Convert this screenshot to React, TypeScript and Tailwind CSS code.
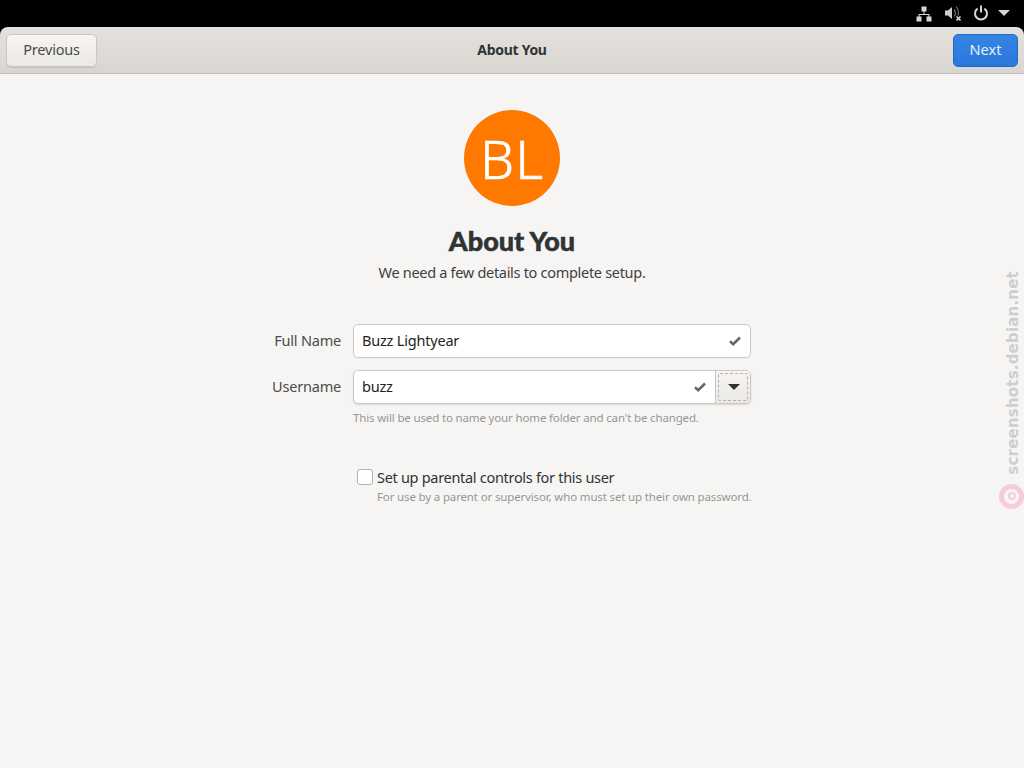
const font = "[font-family:'Noto_Sans',sans-serif]";

const NetworkIcon = () => (
  <svg width="16" height="16" viewBox="0 0 16 16" fill="#d6d6d6">
    <rect x="5.5" y="0.5" width="5" height="5" />
    <rect x="0.5" y="10.5" width="5" height="5" />
    <rect x="10.5" y="10.5" width="5" height="5" />
    <path d="M7.5 5h1v3h5v3h-1V9H3.5v2h-1V8h5z" />
  </svg>
);

const VolumeMutedIcon = () => (
  <svg width="18" height="18" viewBox="0 0 18 18" fill="none">
    <path d="M1 5.5h3l4-3.5v12l-4-3.5H1z" fill="#cfcfcf" />
    <path d="M10 4.5c1 1 1.4 2.2 1.4 3.5s-.4 2.5-1 3.3" stroke="#777" strokeWidth="1.2" />
    <path d="M12 1.5c1.6 1.7 2.4 3.8 2.4 6 0 1.2-.2 2.4-.6 3.4" stroke="#666" strokeWidth="1.2" />
    <path d="M12.5 11.5l4 4m0-4l-4 4" stroke="#d6d6d6" strokeWidth="1.7" />
  </svg>
);

const PowerIcon = () => (
  <svg width="16" height="16" viewBox="0 0 16 16" fill="none" stroke="#d6d6d6" strokeWidth="2">
    <path d="M4.6 3.6a6 6 0 1 0 6.8 0" />
    <path d="M8 0.5v7" />
  </svg>
);

const Check = () => (
  <svg width="12" height="10" viewBox="0 0 12 10" fill="none" stroke="#666865" strokeWidth="2.6">
    <path d="M1 5.2l3.2 3L11 1.5" />
  </svg>
);

const TopBar = () => (
  <div className="h-[27px] bg-black flex items-center justify-end">
    <div className="mr-[92px]"><NetworkIcon /></div>
    <div className="absolute left-[944px] top-[5px]"><VolumeMutedIcon /></div>
    <div className="absolute left-[973px] top-[5px]"><PowerIcon /></div>
    <div className="absolute left-[998px] top-[10px] w-0 h-0 border-x-[6px] border-x-transparent border-t-[6px] border-t-[#d6d6d6]" />
  </div>
);

const HeaderBar = () => (
  <div className="h-[47px] rounded-t-[8px] border-b border-[#c0bbb5] bg-gradient-to-b from-[#e5e2de] to-[#d9d6d1] flex items-center justify-between pl-[6px] pr-[6px] relative">
    <button className="h-[33px] w-[91px] rounded-[5px] border border-[#cdc7c2] bg-gradient-to-b from-[#f6f5f3] to-[#ebe8e5] text-[14.5px] tracking-[-0.2px] text-[#4a4c4c] shadow-[0_1px_1px_rgba(0,0,0,0.1)]">
      Previous
    </button>
    <span className="absolute left-0 right-0 pb-[2px] text-center text-[14px] font-bold tracking-[-0.3px] text-[#2e3436]">About You</span>
    <button className="relative h-[33px] w-[65px] rounded-[5px] border border-[#1b6acb] bg-gradient-to-b from-[#3584e4] to-[#2a78da] text-[14.5px] text-[#e6effa]">
      Next
    </button>
  </div>
);

const Field = ({ label, value, hint, combo }: { label: string; value: string; hint?: string; combo?: boolean }) => (
  <div className="flex items-start">
    <label className="w-[353px] pr-[12px] text-right text-[14.5px] tracking-[-0.2px] leading-[33px] text-[#4a4c4c]">{label}</label>
    <div className="w-[398px]">
      <div className={`h-[34px] flex rounded-[5px] border border-[#cdc7c2] bg-white overflow-hidden ${combo ? "shadow-[0_1px_2px_rgba(0,0,0,0.12)]" : "shadow-[0_1px_1px_rgba(0,0,0,0.03)]"}`}>
        <span className="flex-1 pl-[8px] text-[14.5px] tracking-[-0.2px] leading-[31px] text-[#1f2223]">{value}</span>
        <span className="flex items-center pr-[9px]"><Check /></span>
        {combo && (
          <span className="w-[35px] p-[2px] border-l border-[#cdc7c2] bg-gradient-to-b from-[#f6f5f3] to-[#ebe8e5]">
            <span className="h-full flex items-center justify-center pl-[1px] border border-dashed border-[#b5b1ad] rounded-[2px]">
              <span className="w-0 h-0 border-x-[6px] border-x-transparent border-t-[6px] border-t-[#2e3436]" />
            </span>
          </span>
        )}
      </div>
      {hint && <p className="mt-[6px] text-[11.5px] tracking-[-0.15px] leading-[16px] text-[#979795]">{hint}</p>}
    </div>
  </div>
);

const Watermark = () => (
  <div className="absolute right-0 top-[271px] w-[25px] flex flex-col items-center">
    <span className="ml-[2px] [writing-mode:vertical-rl] rotate-180 text-[15px] font-bold leading-[18px] tracking-[0.2px] text-[#cfcecd] [font-family:'DejaVu_Sans',sans-serif]">
      screenshots.debian.net
    </span>
    <span className="mt-[9px] w-[25px] h-[25px] rounded-full bg-[#f6ccd8] flex items-center justify-center">
      <span className="w-[15px] h-[15px] rounded-full bg-[#f7f6f5] flex items-center justify-center">
        <span className="w-[8px] h-[8px] rounded-full border-2 border-[#f6ccd8]" />
      </span>
    </span>
  </div>
);

export default function App() {
  return (
    <div className={`relative w-[1024px] h-[768px] overflow-hidden bg-black ${font}`}>
      <TopBar />
      <HeaderBar />
      <div className="h-[694px] bg-[#f6f5f4] flex flex-col">
        <div className="mt-[36px] mx-auto w-[96px] h-[96px] rounded-full bg-[#ff7800] flex items-center justify-center text-white text-[54px] tracking-[1px] font-light leading-none [-webkit-text-stroke:0.6px_#ffffff]">
          BL
        </div>
        <h1 className="mt-[17px] text-center text-[27px] leading-[36px] font-black text-[#2e3436] [-webkit-text-stroke:0.5px_#2e3436] [font-family:'Lato',sans-serif]">About You</h1>
        <p className="mt-[3px] text-center text-[14.5px] tracking-[-0.3px] leading-[20px] text-[#3d3f40]">We need a few details to complete setup.</p>
        <div className="mt-[42px] flex flex-col gap-[12px]">
          <Field label="Full Name" value="Buzz Lightyear" />
          <Field label="Username" value="buzz" combo hint="This will be used to name your home folder and can't be changed." />
        </div>
        <div className="mt-[41px] ml-[357px] flex items-start gap-[4px]">
          <span className="mt-[2px] w-[16px] h-[16px] rounded-[3px] border border-[#b6b0aa] bg-white" />
          <div>
            <p className="text-[14.5px] tracking-[-0.3px] leading-[20px] text-[#2e3436]">Set up parental controls for this user</p>
            <p className="text-[11.5px] tracking-[-0.15px] leading-[19px] text-[#979795]">For use by a parent or supervisor, who must set up their own password.</p>
          </div>
        </div>
      </div>
      <Watermark />
    </div>
  );
}
